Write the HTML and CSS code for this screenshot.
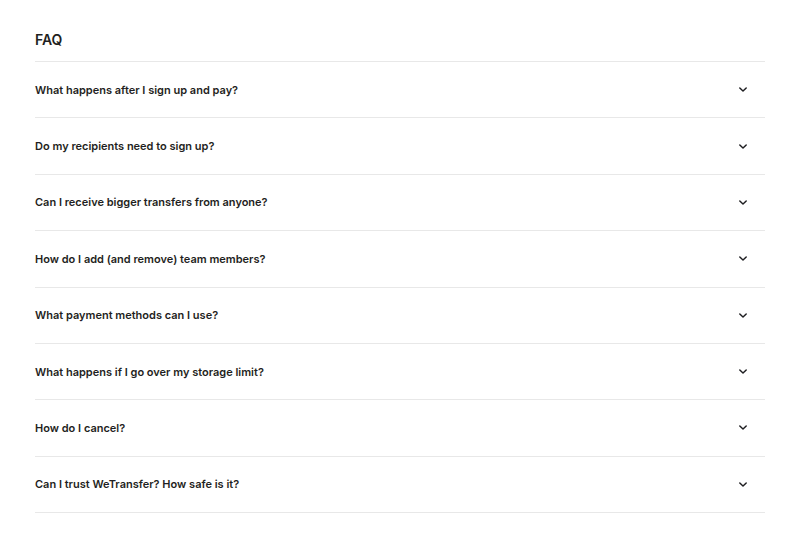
FILE: index.html
```html
<!DOCTYPE html>
<html>
<head>
<meta charset="utf-8">
<link rel="stylesheet" href="styles.css">
</head>
<body>
<section class="faq">
  <h2 class="faq-title">FAQ</h2>
  <ul class="faq-list">
    <li class="faq-item"><span class="q">What happens after I sign up and pay?</span><svg class="chev" viewBox="0 0 10 6"><path d="M1 1l4 4 4-4"/></svg></li>
    <li class="faq-item"><span class="q">Do my recipients need to sign up?</span><svg class="chev" viewBox="0 0 10 6"><path d="M1 1l4 4 4-4"/></svg></li>
    <li class="faq-item"><span class="q">Can I receive bigger transfers from anyone?</span><svg class="chev" viewBox="0 0 10 6"><path d="M1 1l4 4 4-4"/></svg></li>
    <li class="faq-item"><span class="q">How do I add (and remove) team members?</span><svg class="chev" viewBox="0 0 10 6"><path d="M1 1l4 4 4-4"/></svg></li>
    <li class="faq-item"><span class="q">What payment methods can I use?</span><svg class="chev" viewBox="0 0 10 6"><path d="M1 1l4 4 4-4"/></svg></li>
    <li class="faq-item"><span class="q">What happens if I go over my storage limit?</span><svg class="chev" viewBox="0 0 10 6"><path d="M1 1l4 4 4-4"/></svg></li>
    <li class="faq-item"><span class="q">How do I cancel?</span><svg class="chev" viewBox="0 0 10 6"><path d="M1 1l4 4 4-4"/></svg></li>
    <li class="faq-item"><span class="q">Can I trust WeTransfer? How safe is it?</span><svg class="chev" viewBox="0 0 10 6"><path d="M1 1l4 4 4-4"/></svg></li>
  </ul>
</section>
</body>
</html>
```
FILE: styles.css
```css
html, body {
  margin: 0;
  padding: 0;
  background: #ffffff;
}
body {
  font-family: Inter, "Noto Sans", sans-serif;
  color: #1f1f22;
}
.faq {
  padding: 30px 35px 0 35px;
}
.faq-title {
  margin: 0;
  font-size: 14px;
  line-height: 20px;
  font-weight: 600;
  padding-bottom: 11px;
  border-bottom: 1px solid #e8e8e8;
}
.faq-list {
  list-style: none;
  margin: 0;
  padding: 0;
}
.faq-item {
  height: 55.375px;
  border-bottom: 1px solid #e8e8e8;
  display: flex;
  align-items: center;
  justify-content: space-between;
  padding-right: 18px;
}
.q {
  font-size: 11px;
  font-weight: 600;
  letter-spacing: 0;
}
.chev {
  width: 8px;
  height: 5px;
  fill: none;
  stroke: #1f1f22;
  stroke-width: 1.8;
  stroke-linecap: round;
  stroke-linejoin: round;
}
```
